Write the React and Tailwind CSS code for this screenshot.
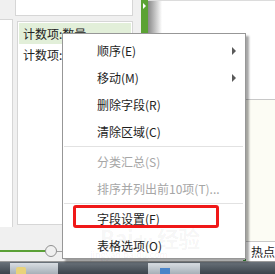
import React from 'react';

const menuItems = [
  { label: '顺序(E)', arrow: true },
  { label: '移动(M)', arrow: true },
  { label: '删除字段(R)' },
  { label: '清除区域(C)' },
  { sep: true },
  { label: '分类汇总(S)', disabled: true },
  { label: '排序并列出前10项(T)...', disabled: true },
  { sep: true },
  { label: '字段设置(F)', marked: true },
  { label: '表格选项(O)' },
];

function ContextMenu() {
  return (
    <div className="absolute left-[62px] top-[33px] w-[184px] h-[226px] bg-white border border-[#979797] pt-[3px] shadow-[3px_3px_2px_rgba(0,0,0,0.35)]">
      {menuItems.map((item, i) =>
        item.sep ? (
          <div key={i} className="h-[3px] flex items-center pl-[1px] pr-[2px]">
            <div className="h-px w-full bg-[#e2e2e2]" />
          </div>
        ) : (
          <div key={i} className="relative h-[27px] flex items-center pl-[34px] pr-[9px]">
            <span className={item.disabled ? 'text-[#a6a6a6]' : 'text-[#1e1e1e]'}>{item.label}</span>
            {item.arrow && (
              <span className="ml-auto w-0 h-0 border-y-[4px] border-y-transparent border-l-[4px] border-l-[#5a5a5a]" />
            )}
            {item.marked && (
              <div className="absolute left-[10px] top-0 w-[146px] h-[23px] border-[3px] border-[#f01818] rounded-[3px]" />
            )}
          </div>
        )
      )}
    </div>
  );
}

function Watermark() {
  return (
    <div className="absolute left-[100px] top-[226px] pointer-events-none text-black/[0.05] leading-none whitespace-nowrap">
      <div className="text-[22px] font-bold tracking-tight">Bai<span className="text-[16px]">du</span> 经验</div>
      <div className="text-[9px] mt-[2px] ml-[-10px]">jingyan.baidu.com</div>
    </div>
  );
}

export default function App() {
  return (
    <div className="relative w-[275px] h-[274px] overflow-hidden bg-[#f0f0f0] text-[12px] font-['Noto_Sans_CJK_SC',sans-serif]">
      <div className="flex h-[261px]">
        {/* left pane: field list */}
        <div className="w-[145px] flex flex-col">
          <div className="ml-[15px] w-[118px] h-[17px] -mt-px bg-white border border-[#d6d6d6]" />
          <div className="flex flex-1 mt-[3px]">
            <div className="w-[13px] h-[208px] bg-white border-t border-r border-[#d6d6d6]" />
            <div className="ml-[4px] mt-[2px] w-[116px] h-[204px] bg-white border border-[#d6d6d6] p-px">
              <div className="h-[21px] flex items-center pl-[4px] bg-[#e2efd9] text-[#222]">计数项:数量</div>
              <div className="h-[22px] flex items-center pl-[4px] text-[#222]">计数项:金额</div>
            </div>
          </div>
          <div className="h-[30px] pt-[10px] flex items-center">
            <div className="h-[2px] w-[45px] bg-[#5aa036]" />
            <div className="w-[12px] h-[12px] rounded-full bg-[#f0f0f0] border border-[#909090]" />
            <div className="h-px flex-1 bg-[#a0a0a0]" />
          </div>
        </div>
        {/* green splitter */}
        <div className="w-[7px] flex flex-col">
          <div className="h-[33px] bg-[#5ba234] pt-[3px] pl-[2px]">
            <span className="block w-0 h-0 border-y-[3px] border-y-transparent border-l-[3px] border-l-white" />
          </div>
          <div className="flex-1 bg-[#f0f0f0]" />
        </div>
        {/* right pane: sheet */}
        <div className="flex-1 flex flex-col bg-white">
          <div className="h-[33px] flex border-t border-[#dcdcdc]">
            <div className="w-[14px] bg-gradient-to-r from-[#8a8a8a] to-white" />
            <div className="flex-1 bg-white" />
          </div>
          <div className="h-[67px] bg-white border-b border-[#c8c8c8]" />
          <div className="h-[142px] bg-[#fcfcf4] border-b border-[#c8c8c8]" />
          <div className="flex-1 flex items-center bg-white whitespace-nowrap">
            <div className="ml-[95px] w-[3px] h-full shrink-0 border-r border-b border-[#3c9a3c]" />
            <span className="ml-[5px] text-[#222]">热点</span>
          </div>
        </div>
      </div>
      {/* taskbar */}
      <div className="h-[13px] flex border-t border-[#9a9a9a] bg-gradient-to-b from-[#6a727a] to-[#3c444c]">
        <div className="ml-[10px] w-[48px] mt-[1px] bg-gradient-to-b from-[#d8dde2] to-[#a8b0b8] flex items-end pl-[6px]">
          <div className="w-[10px] h-[7px] bg-[#e8d27a] rounded-t-[2px]" />
        </div>
        <div className="ml-[90px] w-[52px] mt-[1px] bg-gradient-to-b from-[#d8dde2] to-[#a8b0b8] flex items-end pl-[12px]">
          <div className="w-[10px] h-[6px] bg-[#4a84c8]" />
        </div>
      </div>
      <ContextMenu />
      <Watermark />
    </div>
  );
}
